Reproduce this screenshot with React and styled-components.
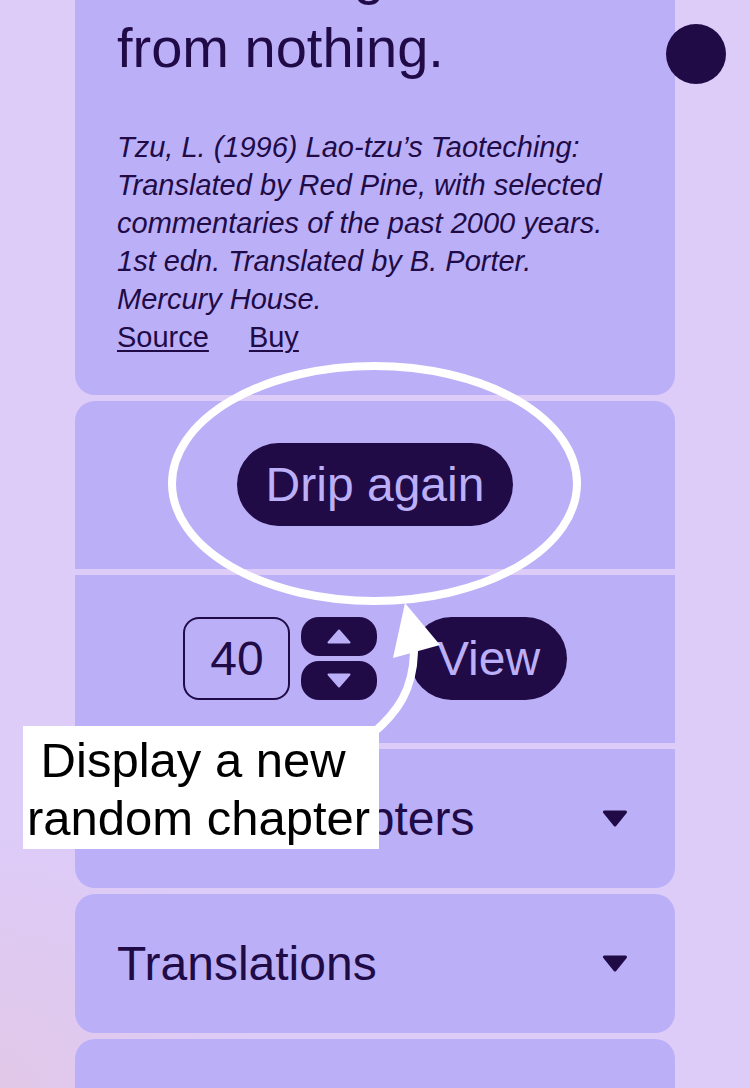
import React from 'react';
import styled, { createGlobalStyle } from 'styled-components';

const palette = {
  bg: '#ddcbf8',
  blush: '#e1c8e8',
  card: '#bbb0f8',
  ink: '#210b47',
  white: '#ffffff',
};

const GlobalStyle = createGlobalStyle`
  html, body {
    margin: 0;
    padding: 0;
    height: 100%;
  }
  body {
    font-family: 'Liberation Sans', Arial, Helvetica, sans-serif;
    background: ${palette.bg};
    overflow: hidden;
  }
  #root {
    height: 100%;
  }
`;

const Page = styled.div`
  position: relative;
  height: 1088px;
  display: flex;
  flex-direction: column;
  align-items: center;
  overflow: hidden;
  background: radial-gradient(
      circle at 0% 100%,
      ${palette.blush} 0,
      rgba(225, 200, 232, 0) 260px
    ),
    ${palette.bg};
`;

const Column = styled.main`
  width: 600px;
  margin-top: -105px;
  display: flex;
  flex-direction: column;
  gap: 6px;
`;

const Card = styled.section`
  box-sizing: border-box;
  background: ${palette.card};
  color: ${palette.ink};
  border-radius: ${(p) => (p.$top ? '20px 20px' : '0 0')}
    ${(p) => (p.$bottom ? '20px 20px' : '0 0')};
`;

const QuoteCard = styled(Card)`
  padding: 42px 42px 39px;
`;

const Verse = styled.h1`
  margin: 0;
  font-size: 56px;
  line-height: 74px;
  font-weight: 400;
`;

const Citation = styled.p`
  margin: 43px 0 0;
  font-size: 29px;
  line-height: 38px;
  font-style: italic;
`;

const LinkRow = styled.div`
  display: flex;
  gap: 40px;
  font-size: 29px;
  line-height: 38px;
`;

const TextLink = styled.a`
  color: inherit;
  text-decoration: underline;
  text-decoration-thickness: 2px;
  text-underline-offset: 3px;
`;

const ActionCard = styled(Card)`
  display: flex;
  justify-content: center;
  align-items: center;
  padding: 42px 0 43px;
`;

const PillButton = styled.button`
  display: inline-flex;
  align-items: center;
  justify-content: center;
  height: 83px;
  padding: 0 ${(p) => p.$pad || 29}px;
  margin-left: ${(p) => p.$offset || 0}px;
  border: none;
  border-radius: 42px;
  background: ${palette.ink};
  color: ${palette.card};
  font-family: inherit;
  font-size: 48px;
  line-height: 55px;
  cursor: pointer;
`;

const Controls = styled.div`
  display: flex;
  align-items: center;
  gap: 11px;
`;

const NumberBox = styled.div`
  box-sizing: border-box;
  width: 107px;
  height: 83px;
  display: flex;
  align-items: center;
  justify-content: center;
  border: 2px solid ${palette.ink};
  border-radius: 16px;
  font-size: 48px;
`;

const Stepper = styled.div`
  display: flex;
  flex-direction: column;
  gap: 5px;
`;

const StepButton = styled.button`
  width: 76px;
  height: 39px;
  display: flex;
  align-items: center;
  justify-content: center;
  padding: 0;
  border: none;
  border-radius: 18px;
  background: ${palette.ink};
  cursor: pointer;
`;

const SectionHeader = styled(Card)`
  display: flex;
  align-items: center;
  justify-content: space-between;
  padding: 42px 47px 42px 42px;
  font-size: 48px;
  line-height: 55px;
`;

const MenuDot = styled.button`
  position: fixed;
  top: 24px;
  right: 24px;
  width: 60px;
  height: 60px;
  padding: 0;
  border: none;
  border-radius: 50%;
  background: ${palette.ink};
`;

const Annotation = styled.svg`
  position: absolute;
  left: 0;
  top: 0;
  width: 750px;
  height: 1088px;
  pointer-events: none;
`;

const Callout = styled.div`
  position: absolute;
  left: 23px;
  top: 726px;
  box-sizing: border-box;
  width: 356px;
  height: 123px;
  padding: 5px 0 0 4px;
  background: ${palette.white};
  color: #000;
  font-size: 49px;
  line-height: 58px;
  white-space: pre;
`;

const Caret = () => (
  <svg width="26" height="17" viewBox="0 0 26 17">
    <polygon
      points="2.5,2 23.5,2 13,15"
      fill={palette.ink}
      stroke={palette.ink}
      strokeWidth="3"
      strokeLinejoin="round"
    />
  </svg>
);

const StepArrow = ({ down }) => (
  <svg width="24" height="15" viewBox="0 0 24 15">
    <polygon
      points={down ? '1.5,1.5 22.5,1.5 12,13.5' : '1.5,13.5 22.5,13.5 12,1.5'}
      fill={palette.card}
      stroke={palette.card}
      strokeWidth="2"
      strokeLinejoin="round"
    />
  </svg>
);

const sections = [
  { title: 'Browse chapters', top: false, bottom: true },
  { title: 'Translations', top: true, bottom: true },
  { title: 'About', top: true, bottom: true },
];

const App = () => {
  return (
    <Page>
      <GlobalStyle />
      <Column>
        <QuoteCard $top $bottom>
          <Verse>
            Something
            <br />
            from nothing.
          </Verse>
          <Citation>
            Tzu, L. (1996) Lao-tzu’s Taoteching: Translated by Red Pine, with
            selected commentaries of the past 2000 years. 1st edn. Translated
            by B. Porter.
            <br />
            Mercury House.
          </Citation>
          <LinkRow>
            <TextLink href="#source">Source</TextLink>
            <TextLink href="#buy">Buy</TextLink>
          </LinkRow>
        </QuoteCard>

        <ActionCard $top>
          <PillButton>Drip again</PillButton>
        </ActionCard>

        <ActionCard>
          <Controls>
            <NumberBox>40</NumberBox>
            <Stepper>
              <StepButton aria-label="Next chapter">
                <StepArrow />
              </StepButton>
              <StepButton aria-label="Previous chapter">
                <StepArrow down />
              </StepButton>
            </Stepper>
            <PillButton $pad={26.5} $offset={22}>
              View
            </PillButton>
          </Controls>
        </ActionCard>

        {sections.map((s) => (
          <SectionHeader key={s.title} $top={s.top} $bottom={s.bottom}>
            <span>{s.title}</span>
            <Caret />
          </SectionHeader>
        ))}
      </Column>

      <MenuDot aria-label="Menu" />

      <Annotation viewBox="0 0 750 1088">
        <ellipse
          cx="374.5"
          cy="483.5"
          rx="202.5"
          ry="117.5"
          fill="none"
          stroke={palette.white}
          strokeWidth="8"
        />
        <path
          d="M 372 734 C 398 712, 413 690, 414 652"
          fill="none"
          stroke={palette.white}
          strokeWidth="8"
          strokeLinecap="round"
        />
        <polygon points="405,603 393,658 440,645" fill={palette.white} />
      </Annotation>
      <Callout>{'\u00a0Display a new\nrandom chapter'}</Callout>
    </Page>
  );
};

export default App;
